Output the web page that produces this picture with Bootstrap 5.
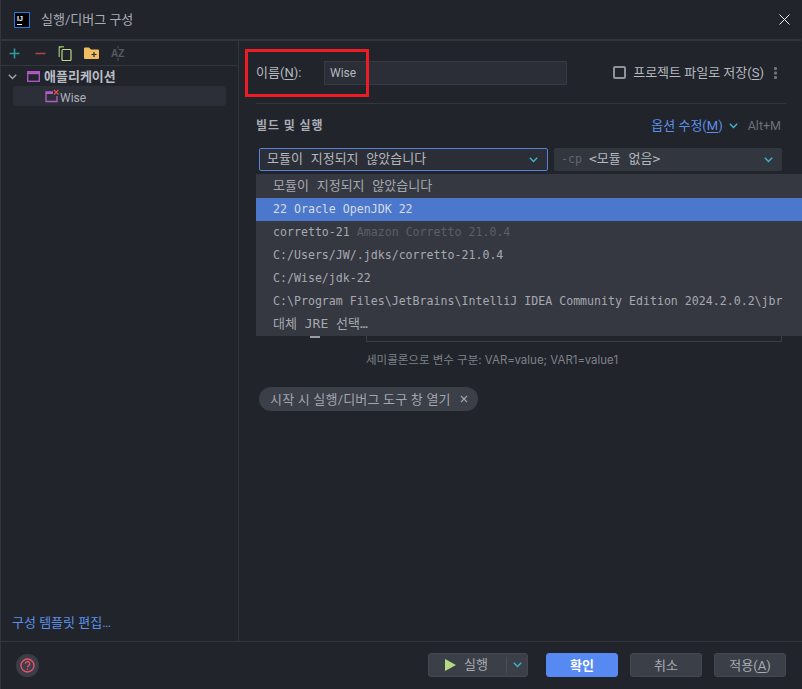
<!DOCTYPE html>
<html lang="ko">
<head>
    <meta charset="UTF-8">
    <meta name="viewport" content="width=device-width, initial-scale=1.0">
    <title>실행/디버그 구성</title>
    <link href="https://cdn.jsdelivr.net/npm/bootstrap@5.3.2/dist/css/bootstrap.min.css" rel="stylesheet">
    <script src="https://cdn.jsdelivr.net/npm/bootstrap@5.3.2/dist/js/bootstrap.bundle.min.js"></script>
    <style>
        body {
            background-color: #21242b;
            color: #b4b8bf;
            font-family: Roboto, "Noto Sans CJK KR", sans-serif;
            font-size: 13px;
            overflow: hidden;
        }

        u { text-underline-offset: 2px; }

        .dialog-wrap {
            position: relative;
            width: 802px;
            height: 689px;
            border-left: 1px solid #33363d;
        }

        .title-bar {
            height: 41px;
            padding-left: 13px;
            padding-right: 11px;
            border-bottom: 2px solid #33363d;
            margin-right: 1px;
        }

        .title-text { margin-left: 11px; color: #a9adb5; }

        .main-area { height: 600px; }

        .side-pane {
            width: 238px;
            border-right: 1px solid #33363d;
        }

        .side-tools {
            height: 25px;
            padding-left: 8px;
            gap: 12px;
            border-bottom: 1px solid #33363d;
        }

        .tool-minus { margin-left: 3px; }

        .tree-group { height: 20px; padding-left: 7px; padding-top: 1px; font-weight: 700; color: #b8bcc3; }
        .tree-chev { margin-right: 10px; }
        .tree-win { margin-right: 4px; }

        .tree-item {
            height: 20px;
            margin-left: 12px;
            margin-right: 12px;
            padding-left: 32px;
            background-color: #2c2f37;
            border-radius: 4px;
            color: #aeb2b9;
            font-size: 12px;
        }

        .tree-item span { padding-top: 3px; }

        .templ-link { padding-left: 11px; padding-bottom: 9px; color: #5c8fe6; }

        .form-pane { padding: 19px 16px 0 17px; }

        .name-row { height: 25px; }

        .name-label { width: 68px; }

        .name-input {
            width: 243px;
            height: 24px;
            padding: 0 5px;
            border: 1px solid #363a42;
            border-radius: 0;
            background-color: #2b2e36;
            color: #b4b8bf;
            font-size: 12px;
        }

        .name-input:focus { background-color: #2b2e36; color: #b4b8bf; box-shadow: none; border-color: #363a42; }

        .save-box {
            width: 13px;
            height: 13px;
            border: 2px solid #8e9299;
            border-radius: 2px;
            margin-right: 7px;
        }

        .kebab { margin-left: 10px; margin-right: 9px; }

        .divider { border-top: 1px solid #33363d; margin-top: 18px; }

        .sect-title { margin-top: 13px; height: 18px; }
        .sect-name { font-weight: 700; font-size: 12px; letter-spacing: .9px; color: #a9adb5; }

        .opt-link { color: #5c8fe6; }
        .opt-chev { margin-left: 6px; }
        .opt-key { color: #6c7078; font-size: 12.5px; margin-left: 10px; margin-right: 5px; }

        .sel-row { margin-top: 13px; }

        .sel-box {
            height: 23px;
            padding: 0 9px 0 7px;
            border-radius: 2px;
            background-color: #32363e;
            font-family: "DejaVu Sans Mono", "Noto Sans CJK KR", monospace;
            font-size: 11.6px;
            white-space: nowrap;
        }

        .sel-module { width: 289px; margin-left: 3px; border: 1px solid #5283d6; background-color: #2b2e36; }
        .sel-cp { width: 228px; margin-left: 6px; }
        .cp-flag { color: #62666e; margin-right: 7px; }
        .kr-mono { font-size: 13px; padding-bottom: 2px; }

        .filler-row { height: 23px; margin-top: 14px; }

        .env-row { height: 23px; margin-top: 37px; }
        .env-label { width: 110px; }
        .env-mark { display: block; width: 10px; height: 2px; margin: 17px 0 0 54px; background-color: #9a9ea5; }
        .env-input { width: 416px; height: 23px; border: 1px solid #3a3e46; }

        .hint-text { margin-left: 110px; margin-top: 10px; font-family: Inter, "Noto Sans CJK KR", sans-serif; font-size: 11.5px; color: #7d8189; }

        .tool-chip {
            display: inline-flex;
            align-items: center;
            height: 24px;
            margin-left: 3px;
            margin-top: 18px;
            padding: 0 10px 0 11px;
            border-radius: 12px;
            background-color: #3b3f48;
            color: #a2a6ad;
            letter-spacing: .2px;
        }

        .tool-chip svg { margin-left: 9px; }

        .foot-bar {
            height: 47px;
            border-top: 1px solid #33363d;
            padding-right: 16px;
            padding-left: 15px;
        }

        .help-circle {
            width: 23px;
            height: 23px;
            border-radius: 50%;
            background-color: #3b3e46;
        }

        .foot-btn {
            width: 72px;
            height: 24px;
            padding: 0;
            margin-left: 12px;
            border: 1px solid #43474f;
            border-radius: 3px;
            background-color: #3b3f47;
            color: #a7abb2;
            font-size: 13px;
            line-height: 1;
        }

        .foot-btn:hover { background-color: #3b3f47; color: #a7abb2; border-color: #43474f; }

        .foot-btn.is-default,
        .foot-btn.is-default:hover { background-color: #568af2; border-color: #568af2; color: #fff; font-weight: 700; }

        .run-split {
            width: 100px;
            height: 24px;
            margin-right: 6px;
            border: 1px solid #43474f;
            border-radius: 3px;
            background-color: #3b3f47;
            color: #a7abb2;
        }

        .run-main { width: 77px; padding-left: 16px; gap: 8px; }
        .run-arrow { flex: 1; height: 16px; border-left: 1px solid #4a4e56; }

        /* popup lies over the form */
        .jdk-menu {
            position: absolute;
            left: 255px;
            top: 174px;
            width: 546px;
            height: 162px;
            margin: 0;
            padding: 0;
            border: 0;
            border-radius: 0;
            background-color: #353840;
            font-family: "DejaVu Sans Mono", "Noto Sans CJK KR", monospace;
            font-size: 11.6px;
        }

        .jdk-item {
            display: flex;
            align-items: center;
            height: 23px;
            padding: 0 0 0 17px;
            color: #a5a9b0;
            white-space: pre;
        }

        .jdk-item:first-child { margin-top: 1px; }
        .jdk-item.is-picked { background-color: #4b78cc; color: #d6dbe4; }
        .jdk-muted { color: #5b5f68; margin-left: 7px; }

        /* red marks drawn on the screenshot */
        .mark-box { position: absolute; border: 3px solid #ed1c24; pointer-events: none; }
        .mark-name { left: 244px; top: 49px; width: 124px; height: 48px; }
        .mark-jdk { left: 255px; top: 194px; width: 183px; height: 34px; }
    </style>
</head>
<body>
    <div class="dialog-wrap">
        <div class="title-bar d-flex align-items-center">
            <svg width="16" height="16" viewBox="0 0 16 16">
                <rect x=".5" y=".5" width="15" height="15" fill="#000" stroke="#1f7de6"/>
                <text x="3" y="8.500" font-size="7" font-weight="700" fill="#fff" font-family="Liberation Sans">IJ</text>
                <rect x="3" y="12" width="5" height="1" fill="#fff"/>
            </svg>
            <span class="title-text">실행/디버그 구성</span>
            <svg class="ms-auto" width="11" height="11" viewBox="0 0 11 11"><path d="M.5.5l10 10M10.500.5l-10 10" stroke="#f0f1f3" fill="none"/></svg>
        </div>

        <div class="main-area d-flex">
            <div class="side-pane d-flex flex-column flex-shrink-0">
                <div class="side-tools d-flex align-items-center">
                    <svg width="11" height="11" viewBox="0 0 11 11"><path d="M5.500.5v10M.5 5.500h10" stroke="#2a9a9f" stroke-width="1.600"/></svg>
                    <svg class="tool-minus" width="11" height="11" viewBox="0 0 11 11"><path d="M.5 5.500h10" stroke="#a8444c" stroke-width="1.600"/></svg>
                    <svg width="14" height="15" viewBox="0 0 14 15" fill="none" stroke="#9fc46f" stroke-width="1.200"><path d="M3.500 1H1.200v10"/><path d="M1 .8h5"/><rect x="4" y="3.500" width="9" height="11" rx="1" stroke="#b8d88a"/></svg>
                    <svg width="15" height="12" viewBox="0 0 15 12"><path d="M0 1.500A1 1 0 0 1 1 .5h4l2 2h7a1 1 0 0 1 1 1V11a1 1 0 0 1-1 1H1a1 1 0 0 1-1-1z" fill="#f0bd62"/><path d="M10 5v5M7.500 7.500h5" stroke="#2b2b2b" stroke-width="1.200"/></svg>
                    <svg width="14" height="15" viewBox="0 0 14 15"><text x="0" y="11" font-size="10" font-weight="700" fill="#565a60" font-family="Liberation Sans">AZ</text><path d="M7 0v2.500M7 12v3" stroke="#565a60"/></svg>
                </div>
                <div class="tree-group d-flex align-items-center">
                    <svg class="tree-chev" width="9" height="6" viewBox="0 0 9 6"><path d="M.8.8l3.700 3.800L8.200.8" fill="none" stroke="#a0a4ab" stroke-width="1.400"/></svg>
                    <svg class="tree-win" width="13" height="11" viewBox="0 0 13 11" fill="none"><rect x=".7" y=".7" width="11.600" height="9.600" stroke="#b55cca" stroke-width="1.300"/><path d="M1 2.200h11" stroke="#b55cca" stroke-width="2"/></svg>
                    <span>애플리케이션</span>
                </div>
                <div class="tree-item d-flex align-items-center">
                    <svg width="15" height="14" viewBox="0 0 15 14" fill="none"><path d="M8 3H1v9.500h11V7" stroke="#b55cca" stroke-width="1.300"/><path d="M1 4h7" stroke="#b55cca" stroke-width="2"/><path d="M9 1l4.500 4.500M13.500 1L9 5.500" stroke="#e0524f" stroke-width="1.200"/></svg>
                    <span>Wise</span>
                </div>
                <div class="templ-link mt-auto">구성 템플릿 편집…</div>
            </div>

            <div class="form-pane flex-grow-1">
                <div class="name-row d-flex align-items-center">
                    <span class="name-label">이름(<u>N</u>):</span>
                    <input class="form-control name-input" type="text" value="Wise">
                    <span class="save-box ms-auto"></span>
                    <span>프로젝트 파일로 저장(<u>S</u>)</span>
                    <svg class="kebab" width="3" height="12" viewBox="0 0 3 12" fill="#6f737a"><rect width="3" height="3" rx="1"/><rect y="4.500" width="3" height="3" rx="1"/><rect y="9" width="3" height="3" rx="1"/></svg>
                </div>
                <div class="divider"></div>
                <div class="d-flex align-items-center sect-title">
                    <span class="sect-name">빌드 및 실행</span>
                    <span class="opt-link ms-auto">옵션 수정(<u>M</u>)</span>
                    <svg class="opt-chev" width="9" height="6" viewBox="0 0 9 6"><path d="M.8.8l3.700 3.800L8.200.8" fill="none" stroke="#3fb3cc" stroke-width="1.400"/></svg>
                    <span class="opt-key">Alt+M</span>
                </div>
                <div class="d-flex sel-row">
                    <div class="sel-box sel-module d-flex align-items-center">
                        <span class="kr-mono">모듈이 지정되지 않았습니다</span>
                        <svg class="ms-auto" width="9" height="6" viewBox="0 0 9 6"><path d="M.8.8l3.700 3.800L8.200.8" fill="none" stroke="#3fb3cc" stroke-width="1.400"/></svg>
                    </div>
                    <div class="sel-box sel-cp d-flex align-items-center">
                        <span class="cp-flag">-cp</span><span class="kr-mono">&lt;모듈 없음&gt;</span>
                        <svg class="ms-auto" width="9" height="6" viewBox="0 0 9 6"><path d="M.8.8l3.700 3.800L8.200.8" fill="none" stroke="#3fb3cc" stroke-width="1.400"/></svg>
                    </div>
                </div>
                <div class="filler-row"></div>
                <div class="filler-row"></div>
                <div class="filler-row"></div>
                <div class="env-row d-flex">
                    <div class="env-label"><span class="env-mark"></span></div>
                    <div class="env-input"></div>
                </div>
                <div class="hint-text">세미콜론으로 변수 구분: VAR=value; VAR1=value1</div>
                <div class="tool-chip">
                    <span>시작 시 실행/디버그 도구 창 열기</span>
                    <svg width="8" height="8" viewBox="0 0 8 8"><path d="M1 1l6 6M7 1L1 7" stroke="#a2a6ad" stroke-width="1.100"/></svg>
                </div>
            </div>
        </div>

        <div class="foot-bar d-flex align-items-center">
            <div class="help-circle d-flex align-items-center justify-content-center">
                <svg width="15" height="15" viewBox="0 0 15 15" fill="none" stroke="#e8536e" stroke-width="1.400"><circle cx="7.500" cy="7.500" r="6.500"/><path d="M5.300 5.800a2.200 2.200 0 1 1 3.300 1.900c-.7.400-1.100.9-1.100 1.600"/><path d="M7.500 10.500v1.300"/></svg>
            </div>
            <div class="run-split d-flex align-items-center ms-auto">
                <div class="run-main d-flex align-items-center">
                    <svg width="11" height="12" viewBox="0 0 11 12"><path d="M0 0l11 6-11 6z" fill="#b4d984"/></svg>
                    <span>실행</span>
                </div>
                <div class="run-arrow d-flex align-items-center justify-content-center">
                    <svg width="9" height="6" viewBox="0 0 9 6"><path d="M.8.8l3.700 3.800L8.200.8" fill="none" stroke="#3fb3cc" stroke-width="1.400"/></svg>
                </div>
            </div>
            <button class="btn foot-btn is-default" type="button">확인</button>
            <button class="btn foot-btn" type="button">취소</button>
            <button class="btn foot-btn" type="button">적용(<u>A</u>)</button>
        </div>

        <div class="dropdown-menu show jdk-menu">
            <div class="jdk-item"><span class="kr-mono">모듈이 지정되지 않았습니다</span></div>
            <div class="jdk-item is-picked">22 Oracle OpenJDK 22</div>
            <div class="jdk-item">corretto-21<span class="jdk-muted">Amazon Corretto 21.0.4</span></div>
            <div class="jdk-item">C:/Users/JW/.jdks/corretto-21.0.4</div>
            <div class="jdk-item">C:/Wise/jdk-22</div>
            <div class="jdk-item">C:\Program Files\JetBrains\IntelliJ IDEA Community Edition 2024.2.0.2\jbr</div>
            <div class="jdk-item"><span class="kr-mono">대체 JRE 선택…</span></div>
        </div>

        <div class="mark-box mark-name"></div>
        <div class="mark-box mark-jdk"></div>
    </div>
</body>
</html>
